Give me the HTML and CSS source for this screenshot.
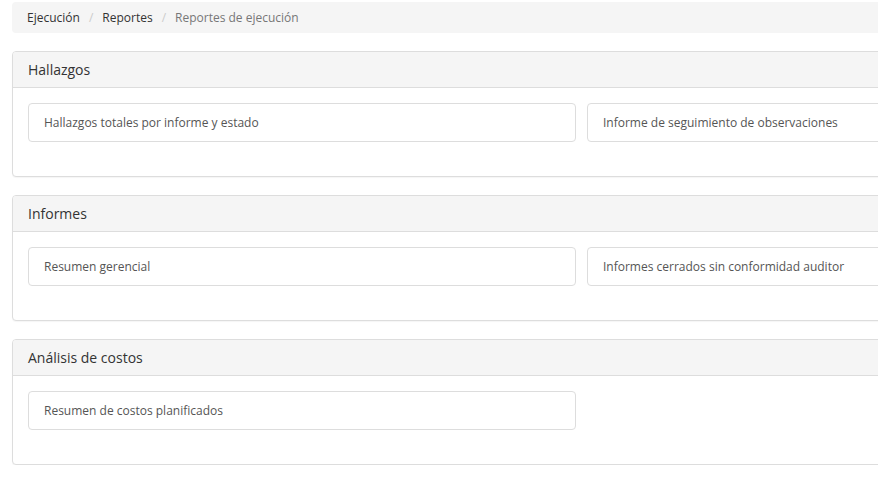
FILE: index.html
```html
<!DOCTYPE html>
<html lang="es">
<head>
<meta charset="utf-8">
<link rel="stylesheet" href="styles.css">
</head>
<body>
<div class="page">
  <ol class="breadcrumb">
    <li><a href="#">Ejecución</a></li>
    <li class="sep">/</li>
    <li><a href="#">Reportes</a></li>
    <li class="sep">/</li>
    <li class="active">Reportes de ejecución</li>
  </ol>

  <section class="card">
    <div class="card-header">Hallazgos</div>
    <div class="card-body">
      <a class="item" href="#">Hallazgos totales por informe y estado</a>
      <a class="item" href="#">Informe de seguimiento de observaciones</a>
    </div>
  </section>

  <section class="card">
    <div class="card-header">Informes</div>
    <div class="card-body">
      <a class="item" href="#">Resumen gerencial</a>
      <a class="item" href="#">Informes cerrados sin conformidad auditor</a>
    </div>
  </section>

  <section class="card">
    <div class="card-header">Análisis de costos</div>
    <div class="card-body">
      <a class="item" href="#">Resumen de costos planificados</a>
    </div>
  </section>
</div>
</body>
</html>
```
FILE: styles.css
```css
html, body {
  margin: 0;
  padding: 0;
  overflow: hidden;
  background: #fff;
}
body {
  font-family: "Open Sans", "Liberation Sans", sans-serif;
  color: #333;
}
.page {
  width: 1160px;
  padding: 2px 0 0 12px;
  display: flex;
  flex-direction: column;
  gap: 18px;
}
.breadcrumb {
  list-style: none;
  margin: 0;
  padding: 0 15px;
  height: 31px;
  background: #f5f5f5;
  border-radius: 4px;
  display: flex;
  align-items: center;
  font-size: 12px;
}
.breadcrumb a {
  color: #333;
  text-decoration: none;
}
.breadcrumb .sep {
  color: #ccc;
  padding: 0 9px;
}
.breadcrumb .active {
  color: #777;
}
.card {
  border: 1px solid #ddd;
  border-radius: 4px;
  background: #fff;
  box-shadow: 0 1px 1px rgba(0, 0, 0, 0.04);
}
.card-header {
  background: #f5f5f5;
  border-bottom: 1px solid #ddd;
  height: 35px;
  padding: 0 15px;
  display: flex;
  align-items: center;
  font-size: 14px;
  color: #333;
  border-radius: 3px 3px 0 0;
}
.card-body {
  padding: 15px 15px 34px;
  display: grid;
  grid-template-columns: 548px 548px;
  column-gap: 11px;
}
.item {
  height: 37px;
  border: 1px solid #ddd;
  border-radius: 4px;
  padding: 0 15px;
  display: flex;
  align-items: center;
  font-size: 12px;
  color: #555;
  text-decoration: none;
}
```
